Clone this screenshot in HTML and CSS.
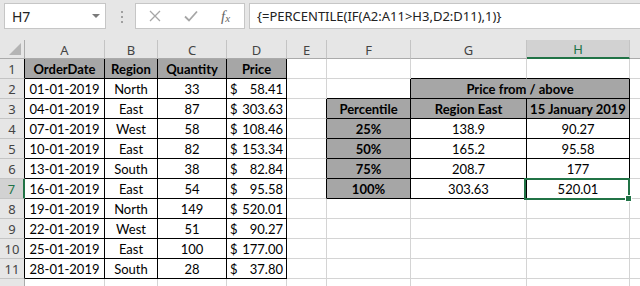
FILE: index.html
```html
<!DOCTYPE html>
<html lang="en">
<head>
    <meta charset="UTF-8">
    <meta name="viewport" content="width=device-width, initial-scale=1.0">
    <title>PERCENTILE IF</title>
    <link rel="stylesheet" href="styles.css">
</head>
<body>
    <div class="formula-bar">
        <div class="name-box"><span>H7</span><span class="caret"></span></div>
        <div class="grip"><i></i><i></i><i></i></div>
        <div class="fx-buttons">
            <svg class="btn-x" width="12" height="12" viewBox="0 0 12 12"><path d="M1 1 L11 11 M11 1 L1 11" stroke="#a6a6a6" stroke-width="1.3" fill="none"/></svg>
            <svg class="btn-ok" width="14" height="12" viewBox="0 0 14 12"><path d="M1 6.5 L5 10.5 L13 1.5" stroke="#a6a6a6" stroke-width="1.8" fill="none"/></svg>
            <span class="fx">f<sub>x</sub></span>
        </div>
        <div class="formula-input">{=PERCENTILE(IF(A2:A11&gt;H3,D2:D11),1)}</div>
    </div>

    <div class="sheet">
        <!-- column headers -->
        <div class="c corner"><span class="tri"></span></div>
        <div class="c ch">A</div>
        <div class="c ch">B</div>
        <div class="c ch">C</div>
        <div class="c ch">D</div>
        <div class="c ch">E</div>
        <div class="c ch">F</div>
        <div class="c ch">G</div>
        <div class="c ch active">H</div>
        <div class="c ch"></div>

        <!-- row 1 -->
        <div class="c rh br">1</div>
        <div class="c fill br bb">OrderDate</div>
        <div class="c fill br bb">Region</div>
        <div class="c fill br bb">Quantity</div>
        <div class="c fill br bb">Price</div>
        <div class="c"></div>
        <div class="c"></div>
        <div class="c bb"></div>
        <div class="c bb"></div>
        <div class="c"></div>

        <!-- row 2 -->
        <div class="c rh br">2</div>
        <div class="c br bb">01-01-2019</div>
        <div class="c br bb">North</div>
        <div class="c br bb">33</div>
        <div class="c acct br bb"><span>$</span><span>58.41</span></div>
        <div class="c"></div>
        <div class="c br bb"></div>
        <div class="c fill br bb span2">Price from / above</div>
        <div class="c"></div>

        <!-- row 3 -->
        <div class="c rh br">3</div>
        <div class="c br bb">04-01-2019</div>
        <div class="c br bb">East</div>
        <div class="c br bb">87</div>
        <div class="c acct br bb"><span>$</span><span>303.63</span></div>
        <div class="c br"></div>
        <div class="c fill br bb">Percentile</div>
        <div class="c fill br bb">Region East</div>
        <div class="c fill br bb">15 January 2019</div>
        <div class="c"></div>

        <!-- row 4 -->
        <div class="c rh br">4</div>
        <div class="c br bb">07-01-2019</div>
        <div class="c br bb">West</div>
        <div class="c br bb">58</div>
        <div class="c acct br bb"><span>$</span><span>108.46</span></div>
        <div class="c br"></div>
        <div class="c fill br bb">25%</div>
        <div class="c br bb">138.9</div>
        <div class="c br bb">90.27</div>
        <div class="c"></div>

        <!-- row 5 -->
        <div class="c rh br">5</div>
        <div class="c br bb">10-01-2019</div>
        <div class="c br bb">East</div>
        <div class="c br bb">82</div>
        <div class="c acct br bb"><span>$</span><span>153.34</span></div>
        <div class="c br"></div>
        <div class="c fill br bb">50%</div>
        <div class="c br bb">165.2</div>
        <div class="c br bb">95.58</div>
        <div class="c"></div>

        <!-- row 6 -->
        <div class="c rh br">6</div>
        <div class="c br bb">13-01-2019</div>
        <div class="c br bb">South</div>
        <div class="c br bb">38</div>
        <div class="c acct br bb"><span>$</span><span>82.84</span></div>
        <div class="c br"></div>
        <div class="c fill br bb">75%</div>
        <div class="c br bb">208.7</div>
        <div class="c br bb">177</div>
        <div class="c"></div>

        <!-- row 7 -->
        <div class="c rh active-row">7</div>
        <div class="c br bb">16-01-2019</div>
        <div class="c br bb">East</div>
        <div class="c br bb">54</div>
        <div class="c acct br bb"><span>$</span><span>95.58</span></div>
        <div class="c br"></div>
        <div class="c fill br bb">100%</div>
        <div class="c br bb">303.63</div>
        <div class="c br bb selected">520.01<span class="sel-box"></span><span class="handle"></span></div>
        <div class="c"></div>

        <!-- row 8 -->
        <div class="c rh br">8</div>
        <div class="c br bb">19-01-2019</div>
        <div class="c br bb">North</div>
        <div class="c br bb">149</div>
        <div class="c acct br bb"><span>$</span><span>520.01</span></div>
        <div class="c"></div>
        <div class="c"></div>
        <div class="c"></div>
        <div class="c"></div>
        <div class="c"></div>

        <!-- row 9 -->
        <div class="c rh br">9</div>
        <div class="c br bb">22-01-2019</div>
        <div class="c br bb">West</div>
        <div class="c br bb">51</div>
        <div class="c acct br bb"><span>$</span><span>90.27</span></div>
        <div class="c"></div>
        <div class="c"></div>
        <div class="c"></div>
        <div class="c"></div>
        <div class="c"></div>

        <!-- row 10 -->
        <div class="c rh br">10</div>
        <div class="c br bb">25-01-2019</div>
        <div class="c br bb">East</div>
        <div class="c br bb">100</div>
        <div class="c acct br bb"><span>$</span><span>177.00</span></div>
        <div class="c"></div>
        <div class="c"></div>
        <div class="c"></div>
        <div class="c"></div>
        <div class="c"></div>

        <!-- row 11 -->
        <div class="c rh br">11</div>
        <div class="c br bb">28-01-2019</div>
        <div class="c br bb">South</div>
        <div class="c br bb">28</div>
        <div class="c acct br bb"><span>$</span><span>37.80</span></div>
        <div class="c"></div>
        <div class="c"></div>
        <div class="c"></div>
        <div class="c"></div>
        <div class="c"></div>

        <!-- row 12 (cut off) -->
        <div class="c rh"></div>
        <div class="c"></div>
        <div class="c"></div>
        <div class="c"></div>
        <div class="c"></div>
        <div class="c"></div>
        <div class="c"></div>
        <div class="c"></div>
        <div class="c"></div>
        <div class="c"></div>
    </div>
</body>
</html>
```

FILE: styles.css
```css
body {
    margin: 0;
    width: 640px;
    height: 286px;
    overflow: hidden;
    background: #fff;
    font-family: Lato, "Liberation Sans", sans-serif;
    color: #000;
}

/* formula bar */
.formula-bar {
    display: flex;
    align-items: flex-start;
    box-sizing: border-box;
    height: 40px;
    padding: 3px 0 0 4px;
    background: #e6e6e6;
}
.name-box {
    display: flex;
    align-items: center;
    justify-content: space-between;
    box-sizing: border-box;
    width: 102px;
    height: 26px;
    padding: 0 5px 0 7px;
    background: #fff;
    border: 1px solid #c6c6c6;
    font-family: "Noto Sans", sans-serif;
    font-size: 14px;
    color: #222;
}
.caret {
    width: 0;
    height: 0;
    border-left: 4px solid transparent;
    border-right: 4px solid transparent;
    border-top: 4px solid #7a7a7a;
}
.grip {
    display: flex;
    flex-direction: column;
    gap: 3px;
    margin: 8px 0 0 15px;
}
.grip i {
    display: block;
    width: 2px;
    height: 2px;
    background: #a0a0a0;
}
.fx-buttons {
    display: flex;
    align-items: center;
    box-sizing: border-box;
    width: 110px;
    height: 26px;
    margin-left: 12px;
    padding-left: 13px;
    background: #fff;
    border: 1px solid #c6c6c6;
}
.btn-ok {
    margin-left: 23px;
}
.fx {
    margin-left: 23px;
    font-family: "Liberation Serif", serif;
    font-style: italic;
    font-size: 15px;
    color: #666;
}
.fx sub {
    font-size: 11px;
    vertical-align: -1px;
}
.formula-input {
    flex: 1;
    box-sizing: border-box;
    height: 26px;
    margin-left: 4px;
    padding-left: 7px;
    background: #fff;
    border: 1px solid #c6c6c6;
    border-right: none;
    font-family: "Noto Sans", sans-serif;
    font-size: 13px;
    line-height: 24px;
    color: #222;
    white-space: nowrap;
}

/* grid */
.sheet {
    display: grid;
    grid-template-columns: 25px 80px 53px 69px 60px 40px 84px 116px 103px 40px;
    grid-template-rows: 19px;
    grid-auto-rows: 20px;
}
.c {
    display: flex;
    align-items: center;
    justify-content: center;
    box-sizing: border-box;
    border-right: 1px solid #d4d4d4;
    border-bottom: 1px solid #d4d4d4;
    font-size: 13px;
    white-space: nowrap;
}
.ch, .rh, .corner {
    background: #e6e6e6;
    border-color: #c4c4c4;
    font-family: "Noto Sans", sans-serif;
    font-size: 13px;
    color: #444;
}
.ch {
    border-bottom-color: #ababab;
    padding-top: 1px;
}
.rh {
    border-right-color: #ababab;
}
.corner {
    position: relative;
    border-bottom-color: #ababab;
    border-right-color: #ababab;
}
.tri {
    position: absolute;
    right: 3px;
    bottom: 3px;
    width: 0;
    height: 0;
    border-left: 12px solid transparent;
    border-bottom: 12px solid #b4b4b4;
}
.ch.active {
    background: #d2d2d2;
    color: #217346;
    border-bottom: 2px solid #217346;
}
.rh.active-row {
    background: #d2d2d2;
    color: #217346;
    border-right: 2px solid #217346;
}

.br { border-right-color: #000; }
.bb { border-bottom-color: #000; }
.fill {
    background: #a6a6a6;
    font-weight: bold;
}
.span2 { grid-column: span 2; }
.acct {
    justify-content: space-between;
    padding: 0 3px 0 3px;
}

.selected {
    position: relative;
}
.sel-box {
    position: absolute;
    top: -1px;
    left: -3px;
    right: -1px;
    bottom: -2px;
    border: 2px solid #217346;
}
.handle {
    position: absolute;
    right: -3px;
    bottom: -4px;
    width: 5px;
    height: 5px;
    background: #217346;
    border: 1px solid #fff;
}
```
